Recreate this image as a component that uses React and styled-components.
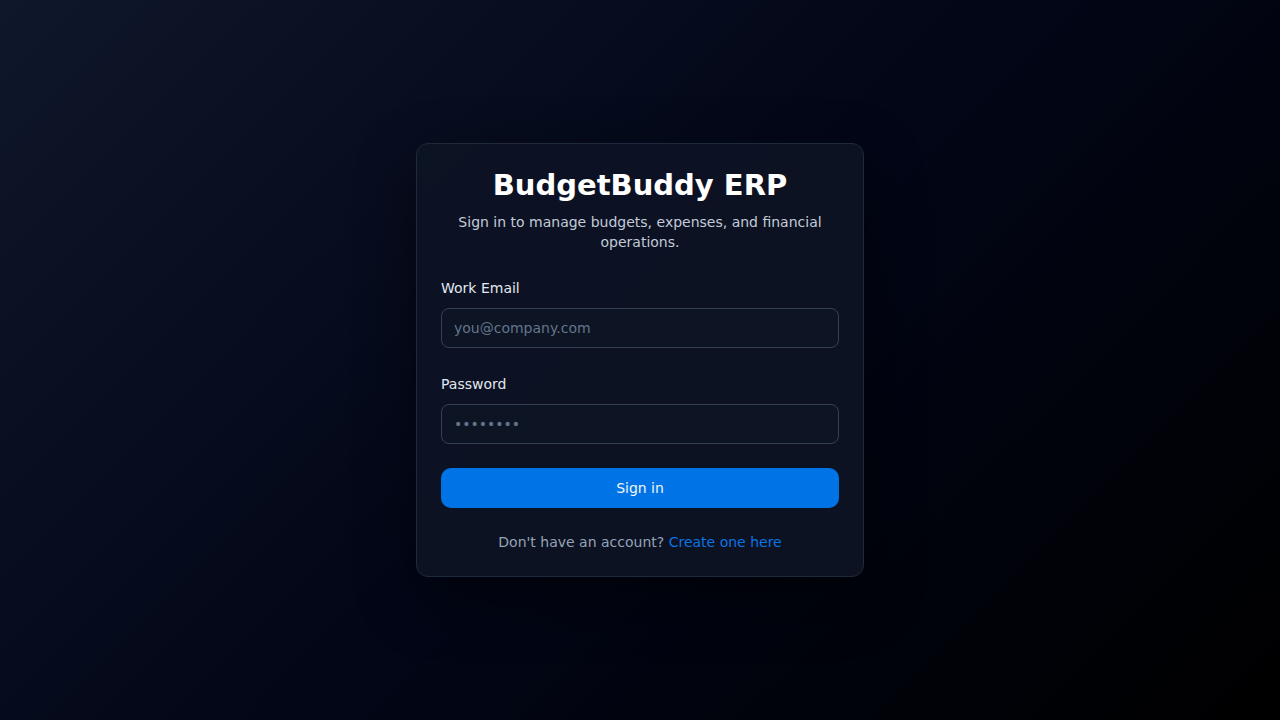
import React from 'react'
import styled, { createGlobalStyle } from 'styled-components'

const GlobalStyle = createGlobalStyle`
    * { box-sizing: border-box; }
    html, body {
        margin: 0;
        padding: 0;
        font-family: "DejaVu Sans", "Liberation Sans", sans-serif;
    }
`

const Page = styled.main`
    width: 100vw;
    height: 100vh;
    display: flex;
    align-items: center;
    justify-content: center;
    background: linear-gradient(135deg, #0f172a 0%, #020617 50%, #000000 100%);
`

const Card = styled.section`
    width: 448px;
    padding: 24px;
    background-color: rgba(13, 20, 36, 0.92);
    border: 1px solid #1e293b;
    border-radius: 12px;
    box-shadow: 0 20px 60px rgba(0, 0, 0, 0.45);
    display: flex;
    flex-direction: column;
`

const Title = styled.h1`
    margin: 0 0 9px;
    font-size: 29px;
    line-height: 35px;
    font-weight: 700;
    color: #ffffff;
    text-align: center;
`

const Subtitle = styled.p`
    margin: 0;
    font-size: 14px;
    line-height: 20px;
    color: #c3cbd8;
    text-align: center;
`

const Form = styled.form`
    margin-top: 26px;
    display: flex;
    flex-direction: column;
`

const Field = styled.div`
    display: flex;
    flex-direction: column;
    gap: 10px;
    margin-bottom: ${props => props.$last ? '24px' : '26px'};
`

const Label = styled.label`
    font-size: 14px;
    line-height: 20px;
    color: #e2e8f0;
`

const Input = styled.input`
    height: 40px;
    padding: 0 12px;
    border: 1px solid #334155;
    border-radius: 8px;
    background-color: #0d1524;
    color: #e2e8f0;
    font-family: inherit;
    font-size: 14px;
    outline: none;

    &::placeholder {
        color: #64748b;
    }
`

const Button = styled.button`
    height: 40px;
    border: none;
    border-radius: 10px;
    background-color: #0074e6;
    color: #f1f5f9;
    font-family: inherit;
    font-size: 14px;
    cursor: pointer;
`

const Footer = styled.p`
    margin: 24px 0 0;
    font-size: 14px;
    line-height: 20px;
    color: #94a3b8;
    text-align: center;
`

const Link = styled.a`
    color: #0a74e2;
    text-decoration: none;
`

function App() {
    return (
        <>
            <GlobalStyle />
            <Page>
                <Card>
                    <Title>BudgetBuddy ERP</Title>
                    <Subtitle>Sign in to manage budgets, expenses, and financial operations.</Subtitle>
                    <Form onSubmit={(e) => e.preventDefault()}>
                        <Field>
                            <Label htmlFor="email">Work Email</Label>
                            <Input id="email" type="email" placeholder="you@company.com" />
                        </Field>
                        <Field $last>
                            <Label htmlFor="password">Password</Label>
                            <Input id="password" type="password" placeholder="••••••••" />
                        </Field>
                        <Button type="submit">Sign in</Button>
                    </Form>
                    <Footer>
                        Don't have an account? <Link href="#">Create one here</Link>
                    </Footer>
                </Card>
            </Page>
        </>
    )
}

export default App
